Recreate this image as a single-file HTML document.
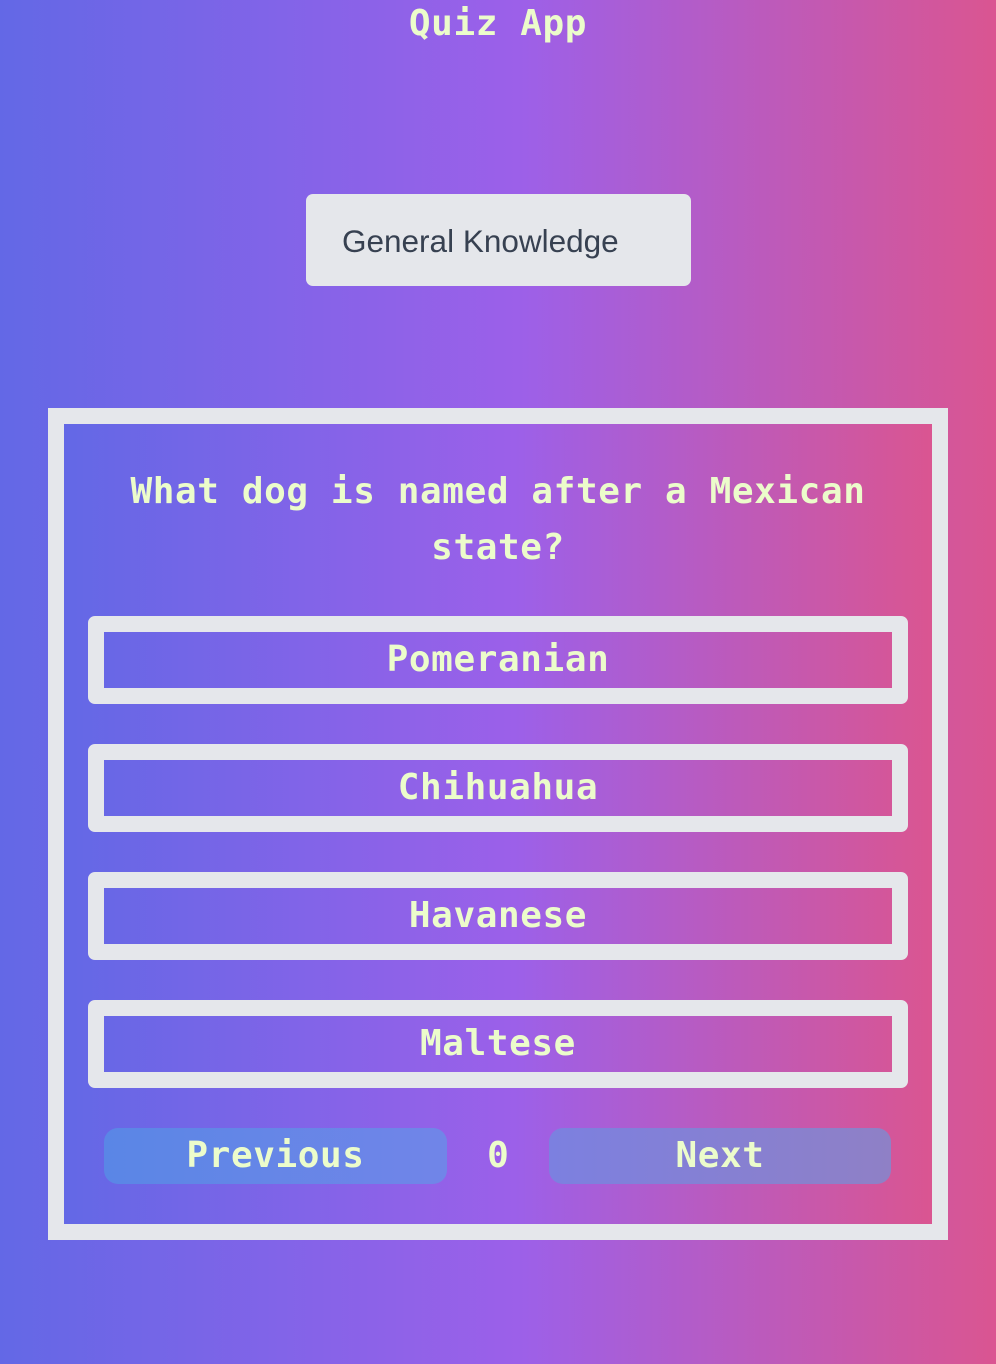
<!DOCTYPE html>
<html><head><style>
*{margin:0;padding:0;box-sizing:border-box}
body{width:996px;height:1364px;background:linear-gradient(90deg,#6368e6 0%,#9c60e9 52%,#da5591 100%);font-family:"DejaVu Sans Mono","Liberation Mono",monospace;font-weight:bold;color:#ecfccb;position:relative;overflow:hidden}
.t{position:absolute;left:0;width:996px;text-align:center;top:3px;font-size:36px;letter-spacing:0.6px}
.sel{position:absolute;left:306px;top:194px;width:385px;height:92px;background:#e5e7eb;border-radius:7px;font-family:"Liberation Sans",sans-serif;font-weight:normal;color:#374151;font-size:31.5px;padding-left:36px;line-height:94px}
.card{position:absolute;left:48px;top:408px;width:900px;height:832px;border:16px solid #e5e7eb;background:linear-gradient(90deg,#6368e6 0%,#9c60e9 52%,#da5591 100%)}
.q{position:absolute;left:0;width:868px;top:40px;text-align:center;font-size:36px;line-height:56px;letter-spacing:0.6px;padding:0 40px}
.a{position:absolute;left:24px;width:820px;height:88px;border:16px solid #e5e7eb;border-radius:7px;text-align:center;font-size:36px;line-height:56px;letter-spacing:0.6px}
.b{position:absolute;top:704px;height:56px;width:343px;border-radius:14px;text-align:center;font-size:36px;line-height:56px;letter-spacing:0.6px}
</style></head><body>
<div class="t">Quiz App</div>
<div class="sel">General Knowledge</div>
<div class="card">
<div class="q">What dog is named after a Mexican state?</div>
<div class="a" style="top:192px">Pomeranian</div>
<div class="a" style="top:320px">Chihuahua</div>
<div class="a" style="top:448px">Havanese</div>
<div class="a" style="top:576px">Maltese</div>
<div class="b" style="left:40px;background:linear-gradient(90deg,#5a86e6,#7185e8)">Previous</div>
<div style="position:absolute;left:0;width:868px;text-align:center;top:704px;line-height:56px;font-size:36px">0</div>
<div class="b" style="left:485px;width:342px;background:linear-gradient(90deg,#7c80e0,#8f80c6)">Next</div>
</div>
</body></html>
